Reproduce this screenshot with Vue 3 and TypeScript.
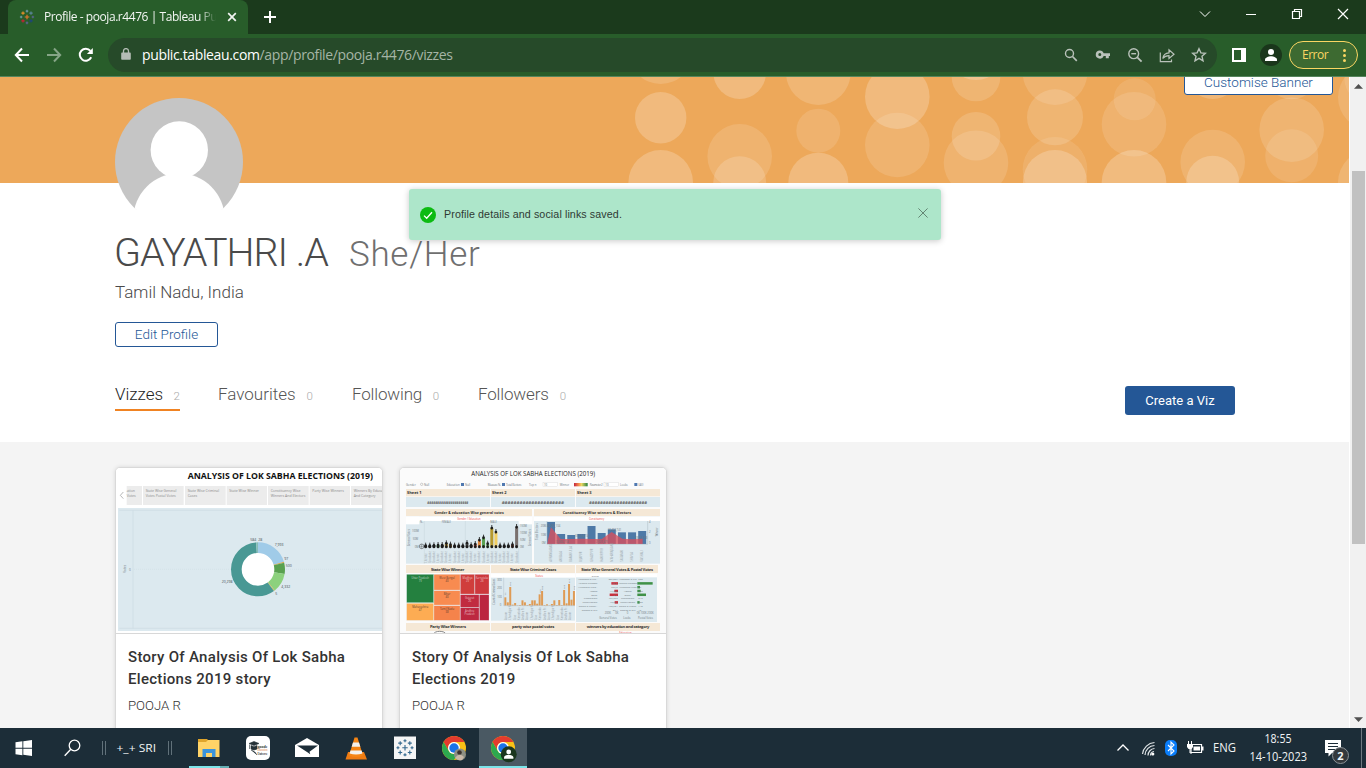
<script setup lang="ts">
interface Circle { x: number; y: number; r: number; o: number }

const circles: Circle[] = [
  [660.7, 51.7, 32.3, 0.15], [660.7, 117.7, 25.7, 0.21], [660.7, 182.3, 32.3, 0.21],
  [739.7, 72.7, 26.3, 0.21], [739.7, 156.3, 32.3, 0.13], [739.7, 182.7, 26.5, 0.17],
  [818.3, 72.7, 32.3, 0.16], [818.3, 130.7, 22, 0.12], [818.3, 182.7, 30, 0.21],
  [897.3, 96.7, 32.3, 0.21], [897.3, 145, 32.3, 0.13],
  [976, 77, 24.3, 0.15], [976, 50, 30, 0.2], [976, 136.3, 24.3, 0.15], [976, 162.7, 32.3, 0.13],
  [1055, 72.7, 32.3, 0.13], [1055, 117.3, 28, 0.15], [1055, 169.3, 32.3, 0.1], [1055, 182, 32, 0.21],
  [1134.7, 99.3, 21, 0.1], [1134, 124.3, 32.3, 0.12], [1134, 182.3, 32.3, 0.22],
  [1212.7, 162, 32.3, 0.13], [1212.7, 182.3, 26.5, 0.2], [1212.7, 72.7, 26.3, 0.18],
  [1291.7, 129.7, 32.3, 0.14], [1291.7, 155.7, 26.5, 0.11], [1291.7, 72.7, 26.5, 0.15],
  [1370.3, 97.3, 32.3, 0.13], [1370.3, 78, 26, 0.1], [1370.3, 182.3, 32.3, 0.15],
].map(([x, y, r, o]) => ({ x, y: y - 77, r, o }))

const tabs = [
  { name: 'Vizzes', count: 2, cls: 'tab t1 active' },
  { name: 'Favourites', count: 0, cls: 'tab t2' },
  { name: 'Following', count: 0, cls: 'tab t3' },
  { name: 'Followers', count: 0, cls: 'tab t4' },
]

const storyTabs = [
  { x: 50, w: 46, a: 'ation', b: 'Votes' },
  { x: 99, w: 122, a: 'State Wise General', b: 'Votes Postal Votes' },
  { x: 225, w: 122, a: 'State Wise Criminal', b: 'Cases' },
  { x: 350, w: 121, a: 'State Wise Winner', b: '' },
  { x: 474, w: 122, a: 'Constituency Wise', b: 'Winners And Electors' },
  { x: 599, w: 121, a: 'Party Wise Winners', b: '' },
  { x: 723, w: 100, a: 'Winners By Educa', b: 'And Category' },
]

const slices = [
  { c: '#a0cbe8', s: 0, l: 73 },
  { c: '#d9a648', s: 73, l: 2 },
  { c: '#59a14f', s: 75, l: 25 },
  { c: '#8cd17d', s: 100, l: 41 },
  { c: '#d8b850', s: 141, l: 2 },
  { c: '#499894', s: 143, l: 211 },
  { c: '#86bcb6', s: 354, l: 6 },
]

const sheets = [
  { x: 33, w: 252, n: 'Sheet 1', tx: 97, tw: 123 },
  { x: 288, w: 252, n: 'Sheet 2', tx: 320, tw: 187 },
  { x: 543, w: 252, n: 'Sheet 3', tx: 582, tw: 174 },
]

const gantt = [
  [3, '#222'], [3, '#222'], [4, '#222'], [5, '#3c7a3c'], [5, '#222'], [10, '#b08a30'], [6, '#b07a30'], [3, '#222'], [3, '#222'], [3, '#222'],
  [11, '#555'], [4, '#222'], [8, '#b5533c'], [20, '#e08a40'], [27, '#59a14f'], [9, '#8cd17d'], [56, '#b6992d'], [44, '#f1ce63'],
  [3, '#222'], [3, '#222'], [3, '#222'], [6, '#b5533c'], [59, '#79706e'],
].map(([h, c], i) => ({ x: 92 + i * 12.4, h: h as number, c: c as string }))

const blue = [66, 30, 27, 30, 54, 33, 44, 35, 35, 39]
const redArea = '456,252 468,202 497,237 530,237 560,236 590,237 620,237 650,216 682,236 712,238 743,236 743,252'

const crime = [25, 10, 56, 3, 8, 1, 2, 16, 10, 2, 5, 16, 16, 6, 34, 44, 2, 4, 1, 5, 16, 2, 17, 2, 47, 7, 65, 18, 44]

const treemap = [
  { x: 35, y: 343, w: 81, h: 85, c: '#24803f', t: 'Uttar Pradesh', n: '79' },
  { x: 35, y: 430, w: 81, h: 51, c: '#fdac53', t: 'Maharashtra', n: '47' },
  { x: 117, y: 343, w: 78, h: 47, c: '#f88b50', t: 'West Bengal', n: '40' },
  { x: 117, y: 392, w: 78, h: 43, c: '#f88b50', t: 'Bihar', n: '40' },
  { x: 117, y: 437, w: 78, h: 44, c: '#f5834b', t: 'Tamil Nadu', n: '38' },
  { x: 196, y: 343, w: 43, h: 59, c: '#d03e3c', t: 'Madhya', n: '29' },
  { x: 240, y: 343, w: 42, h: 59, c: '#cd383d', t: 'Karnataka', n: '28' },
  { x: 196, y: 404, w: 56, h: 38, c: '#c12b40', t: 'Gujarat', n: '26' },
  { x: 253, y: 404, w: 29, h: 77, c: '#bb2640', t: '', n: '' },
  { x: 196, y: 443, w: 56, h: 38, c: '#bd2840', t: 'Andhra', n: 'Pradesh' },
]

const voteRows = [
  { s: 'Andaman & Nic..', v: '206,807', m: 'Andaman & Nic', r: 0, g: 0, n: '500' },
  { s: 'Andhra Pradesh', v: '30,7', m: 'Andhra Pradesh', r: 20, g: 46, n: '' },
  { s: 'Arunachal Prad..', v: '665,0', m: 'Arunachal Prad', r: 0, g: 8, n: '86' },
  { s: 'Assam', v: '17,986', m: 'Assam', r: 11, g: 10, n: '480' },
  { s: 'Bihar', v: '40,1', m: 'Bihar', r: 25, g: 26, n: '' },
  { s: 'Chandigarh', v: '456,252', m: 'Chandigarh', r: 0, g: 0, n: '342' },
  { s: 'Chhattisgarh', v: '13,656', m: 'Chhattisgarh', r: 10, g: 7, n: '280' },
  { s: 'Dadra & Nagar..', v: '198,684', m: 'Dadra & Nagar', r: 0, g: 0, n: '148' },
  { s: 'Daman & Diu', v: '86,4', m: 'Daman & Diu', r: 0, g: 0, n: '43' },
]

const plus = [
  [12, 12, 3.4, 'c'], [12, 3.2, 1.9, 't'], [12, 20.8, 1.9, 'b'], [3.2, 12, 1.9, 'l'], [20.8, 12, 1.9, 'r'],
  [6, 6.2, 2.5, 'tl'], [18, 6.2, 2.5, 'tr'], [6, 17.8, 2.5, 'bl'], [18, 17.8, 2.5, 'br'],
] as [number, number, number, string][]
const plusColor: Record<string, string> = {
  c: '#e8762c', t: '#7099a5', b: '#5a6591', l: '#7099a5', r: '#5b6591', tl: '#eb9129', tr: '#5b879b', bl: '#c72035', br: '#1f457e',
}
const plusPath = (p: [number, number, number, string]) =>
  `M${p[0] - p[2]} ${p[1]}h${p[2] * 2}M${p[0]} ${p[1] - p[2]}v${p[2] * 2}`
</script>

<template>
  <div class="screen">
    <header class="titlebar">
      <div class="tabchip">
        <svg class="fav" viewBox="0 0 24 24"><path v-for="p in plus" :key="p[3]" :d="plusPath(p)" :stroke="plusColor[p[3]]" stroke-width="1.7" /></svg>
        <span class="tabtitle">Profile - pooja.r4476 | Tableau Public</span>
        <svg class="tabx" viewBox="0 0 10 10"><path d="M1.2 1.2l7.6 7.6M8.8 1.2L1.2 8.8" stroke="#f2f5f2" stroke-width="1.7" /></svg>
      </div>
      <svg class="newtab" viewBox="0 0 14 14"><path d="M7 1v12M1 7h12" stroke="#fff" stroke-width="2" /></svg>
      <div class="winctl">
        <svg width="12" height="12" viewBox="0 0 12 12"><path d="M1 3.5l5 5 5-5" /></svg>
        <svg width="12" height="12" viewBox="0 0 12 12"><path d="M1 6.5h10" /></svg>
        <svg width="12" height="12" viewBox="0 0 12 12"><path d="M1.5 3.5h7v7h-7zM3.5 3.5v-2h7v7h-2" stroke-width="1.2" /></svg>
        <svg width="12" height="12" viewBox="0 0 12 12"><path d="M1 1l10 10M11 1L1 11" stroke-width="1.2" /></svg>
      </div>
    </header>

    <div class="toolbar">
      <svg class="nav back" viewBox="0 0 16 16"><path d="M15 8H2M8 1.5L1.8 8 8 14.5" stroke="#fff" /></svg>
      <svg class="nav fwd" viewBox="0 0 16 16"><path d="M1 8h13M8 1.5L14.2 8 8 14.5" stroke="#86a587" /></svg>
      <svg class="nav reload" viewBox="0 0 16 16"><path d="M13.2 10.3A6 6 0 1 1 12.4 3.9" stroke="#fff" /><path d="M14.8 1v5.9H8.9z" fill="#fff" stroke="none" /></svg>
      <div class="omnibox">
        <svg class="lock" viewBox="0 0 10 12"><path d="M1 4.6h8a.8.8 0 0 1 .8.8v5.6a.8.8 0 0 1-.8.8H1a.8.8 0 0 1-.8-.8V5.400A.8.8 0 0 1 1 4.600z" fill="#b4bcb5" /><path d="M2.500 5V2.900a2.500 2.300 0 0 1 5 0V5" fill="none" stroke="#b4bcb5" stroke-width="1.300" /></svg>
        <span class="url"><b>public.tableau.com</b>/app/profile/pooja.r4476/vizzes</span>
        <div class="omni-icons">
          <svg viewBox="0 0 16 16"><circle cx="6.500" cy="6.500" r="4" /><path d="M9.500 9.500l4.300 4.300" stroke-width="1.700" /></svg>
          <svg viewBox="0 0 16 16"><path d="M4.800 3.400a4.100 4.100 0 1 0 3.900 5.500h2.100v2.300h3V8.900H15V6.300H8.700A4.100 4.100 0 0 0 4.800 3.400zm0 2.700a1.500 1.500 0 1 1 0 3 1.500 1.500 0 0 1 0-3z" fill="#b9c2ba" stroke="none" fill-rule="evenodd" /></svg>
          <svg viewBox="0 0 16 16"><circle cx="6.700" cy="6.700" r="4.900" /><path d="M10.300 10.300l4.300 4.300" stroke-width="1.800" /><path d="M4.300 6.700h4.800" /></svg>
          <svg viewBox="0 0 16 16"><path d="M1.300 5.500v9.200h11.200v-2.200M3.800 11.500c.6-3.800 2.800-5.600 6.200-5.700V2.900L15 7.200l-5 4.200V8.600c-2.800 0-4.600.8-6.200 2.900z" stroke-width="1.200" /></svg>
          <svg viewBox="0 0 16 16"><path d="M8 1.700l1.900 4.200 4.500.4-3.400 3 1 4.500L8 11.400l-4 2.400 1-4.500-3.400-3 4.500-.4z" /></svg>
        </div>
      </div>
      <svg class="side" viewBox="0 0 14 14"><path d="M0 0h14v14H0zM2 2v10h7V2z" fill="#fff" fill-rule="evenodd" /></svg>
      <svg class="user" viewBox="0 0 22 22"><circle cx="11" cy="11" r="11" fill="#1a361b" /><circle cx="11" cy="8" r="3" fill="#fff" /><path d="M5 17v-1.500c0-2 3.500-3.300 6-3.300s6 1.300 6 3.300V17z" fill="#fff" /></svg>
      <div class="errpill"><span>Error</span><i><u></u><u></u><u></u></i></div>
    </div>

    <main class="viewport">
      <div class="page">
        <section class="banner">
          <svg class="dots" viewBox="0 0 1349 106"><circle v-for="(c, i) in circles" :key="i" :cx="c.x" :cy="c.y" :r="c.r" :fill-opacity="c.o" fill="#fff" /></svg>
          <button class="customise">Customise Banner</button>
        </section>

        <section class="head">
          <svg class="avatar" viewBox="0 0 128 128">
            <clipPath id="av"><circle cx="64" cy="64" r="64" /></clipPath>
            <g clip-path="url(#av)"><rect width="128" height="112" fill="#c5c5c5" /><circle cx="64.300" cy="52" r="28.700" fill="#fff" /><circle cx="64" cy="121" r="45.700" fill="#fff" /><rect y="110.300" width="128" height="18" fill="#fff" /></g>
          </svg>
          <div class="names"><h1>GAYATHRI .A</h1><span class="pronoun">She/Her</span></div>
          <div class="location">Tamil Nadu, India</div>
          <button class="edit">Edit Profile</button>
          <div class="tabrow">
            <nav class="tabs">
              <a v-for="t in tabs" :key="t.name" :class="t.cls"><span class="tn">{{ t.name }}</span><span class="tc">{{ t.count }}</span></a>
            </nav>
            <button class="create">Create a Viz</button>
          </div>
        </section>

        <section class="cards">
          <article class="card">
            <svg class="thumb" viewBox="18 24 798 495">
              <rect x="18" y="24" width="798" height="495" fill="#fff" />
              <text x="233" y="57" class="tb" font-size="28" textLength="556" lengthAdjust="spacingAndGlyphs">ANALYSIS OF LOK SABHA ELECTIONS (2019)</text>
              <path d="M40 96l-9 10 9 10" fill="none" stroke="#aaa" stroke-width="2.500" />
              <g v-for="s in storyTabs" :key="s.x"><rect :x="s.x" y="78" :width="s.w" height="57" fill="#ececec" /><text :x="s.x === 50 ? 50 : s.x + 8" y="97" class="tt" font-size="10.500">{{ s.a }}</text><text :x="s.x === 50 ? 50 : s.x + 8" y="112" class="tt" font-size="10.500">{{ s.b }}</text></g>
              <rect x="24" y="144" width="794" height="369" fill="#dce9ef" />
              <path d="M28 151h790M28 505h790M69 151v354" stroke="#cbdbe3" stroke-width="2" />
              <path d="M72 328h746" stroke="#cfdde3" stroke-width="1.500" stroke-dasharray="3 3" />
              <text transform="translate(48 338) rotate(-90)" class="lab" font-size="9">Votes</text><text x="57" y="332" class="lab" font-size="9">0</text>
              <circle cx="444" cy="328" r="50" fill="#fff" />
              <circle v-for="s in slices" :key="s.s" cx="444" cy="328" r="65" fill="none" :stroke="s.c" stroke-width="32" pathLength="360" :stroke-dasharray="`${s.l} ${360 - s.l}`" :stroke-dashoffset="-s.s" transform="rotate(-90 444 328)" />
              <g class="lab dark" font-size="10.500"><text x="421" y="242">584</text><text x="445" y="242">28</text><text x="494" y="258">7,993</text><text x="523" y="299">97</text><text x="527" y="321">500</text><text x="514" y="383">4,332</text><text x="496" y="405">5</text><text x="335" y="370">20,298</text></g>
            </svg>
            <div class="info"><h3>Story Of Analysis Of Lok Sabha Elections 2019 story</h3><p>POOJA R</p></div>
          </article>

          <article class="card">
            <svg class="thumb" viewBox="15 24 798 495">
              <rect x="15" y="24" width="798" height="495" fill="#fbfbfb" />
              <text x="229" y="49" class="tr" font-size="20" textLength="371" lengthAdjust="spacingAndGlyphs">ANALYSIS OF LOK SABHA ELECTIONS (2019)</text>
              <g class="lab" font-size="8.500">
                <text x="33" y="77">Gender</text><circle cx="80" cy="73" r="3.500" fill="none" stroke="#777" /><text x="87" y="77">Null</text>
                <text x="155" y="77">Education</text><rect x="198" y="69" width="9" height="9" fill="#4f78b0" /><text x="210" y="77">Null</text>
                <text x="278" y="77" textLength="40">Measure N..</text><rect x="321" y="69" width="9" height="9" fill="#4f78b0" /><text x="333" y="77" textLength="46">Total Electors</text>
                <text x="402" y="77">Top n</text><text x="494" y="77">Winner</text>
                <text x="584" y="77" textLength="39">Parameter 2</text><text x="675" y="77">Looks</text><rect x="718" y="69" width="9" height="9" fill="#4f78b0" /><text x="730" y="77">(All)</text>
              </g>
              <rect x="444" y="67" width="44" height="13" fill="#fff" stroke="#ccc" /><text x="447" y="77" class="lab" font-size="8.500">10</text>
              <rect x="627" y="67" width="44" height="13" fill="#fff" stroke="#ccc" /><text x="631" y="77" class="lab" font-size="8.500">10</text>
              <defs><linearGradient id="heat"><stop offset="0" stop-color="#c3253f" /><stop offset=".35" stop-color="#f58d4e" /><stop offset=".55" stop-color="#e9d863" /><stop offset="1" stop-color="#24803f" /></linearGradient></defs>
              <rect x="537" y="69" width="41" height="10" fill="url(#heat)" />

              <g v-for="s in sheets" :key="s.n"><rect :x="s.x" y="87" :width="s.w" height="22" fill="#f5e8d6" /><text :x="s.x + 3" y="101" class="hd" font-size="12">{{ s.n }}</text><rect :x="s.x" y="111" :width="s.w" height="30" fill="#dce9ef" /><text :x="s.tx" y="131" class="hash" font-size="10" :textLength="s.tw" lengthAdjust="spacingAndGlyphs">#####################</text></g>

              <rect x="33" y="147" width="378" height="21" fill="#f5e8d6" /><rect x="417" y="147" width="378" height="21" fill="#f5e8d6" />
              <text x="118" y="162" class="hd" font-size="12.500" textLength="208" lengthAdjust="spacingAndGlyphs">Gender &amp; education Wise general votes</text>
              <text x="503" y="162" class="hd" font-size="12.500" textLength="205" lengthAdjust="spacingAndGlyphs">Constituency Wise winners &amp; Electors</text>
              <rect x="33" y="170" width="378" height="141" fill="#dce9ef" /><rect x="33" y="170" width="378" height="13" fill="#fff" /><rect x="33" y="170" width="40" height="23" fill="#fff" /><rect x="371" y="170" width="40" height="23" fill="#fff" />
              <text x="187" y="180" class="rd" font-size="9.500" textLength="70" lengthAdjust="spacingAndGlyphs">Gender / Education</text>
              <rect x="417" y="170" width="378" height="141" fill="#dce9ef" /><rect x="417" y="170" width="378" height="13" fill="#fff" /><text x="582" y="180" class="rd" font-size="9.500" textLength="46" lengthAdjust="spacingAndGlyphs">Constituency</text>
              <g class="lab" font-size="8"><text x="75" y="190">N..</text><text x="140" y="190" textLength="28" lengthAdjust="spacingAndGlyphs">FEMALE</text><text x="286" y="190" textLength="20" lengthAdjust="spacingAndGlyphs">MALE</text><text x="51" y="215">100M</text><text x="53" y="240">50M</text><text x="59" y="265">0M</text><text x="375" y="202">150M</text><text x="375" y="223">100M</text><text x="375" y="244">50M</text><text x="375" y="265">0M</text><text transform="translate(45 259) rotate(-90)">General Votes</text><text transform="translate(407 259) rotate(-90)">General Votes</text></g>
              <path d="M88 183v128M211 183v128M371 193v118" stroke="#c6d5dc" stroke-width="1.500" />
              <circle cx="80" cy="259" r="7" fill="none" stroke="#333" stroke-width="1.500" /><path d="M73 259h14M80 252v14" stroke="#333" />
              <g v-for="(g, i) in gantt" :key="i"><rect :x="g.x - 4.500" :y="260 - g.h" width="9" :height="g.h + 2" :fill="g.c" /><ellipse :cx="g.x" cy="260" rx="4" ry="5" fill="#1d1d1d" /><path :d="`M${g.x} ${251 - g.h}v14`" stroke="#1d1d1d" stroke-width="2.500" /><circle :cx="g.x" :cy="260 - g.h" r="4" fill="#1d1d1d" /><text :transform="`translate(${g.x + 3} 308) rotate(-90)`" class="axis" font-size="8">{{ i % 3 ? 'Graduate' : 'Literate' }}</text></g>

              <rect v-for="(h, i) in blue" :key="'b' + i" :x="456 + i * 30.400" :y="252 - h" width="24" :height="h" fill="#4e79a7" />
              <polygon :points="redArea" fill="#d9505c" fill-opacity=".78" />
              <path d="M456 183v70M758 183v70M456 253h302" stroke="#aabac2" stroke-width="1.500" />
              <g class="lab" font-size="8"><text x="437" y="202">20M</text><text x="437" y="228">10M</text><text x="440" y="252">0M</text><text x="762" y="190">4</text><text x="762" y="220">2</text><text x="762" y="251">0</text><text x="455" y="202">46,201,104</text><text x="480" y="250">13,866,714</text><text x="540" y="232">18,014,714</text><text x="603" y="250">2,021,475</text><text x="638" y="213">18,404,741</text><text x="720" y="236" textLength="37">18,152,718</text><text transform="translate(429 240) rotate(-90)">Total Electors</text><text transform="translate(788 229) rotate(-90)">Winner</text></g>
              <text v-for="(n, i) in ['AURANGABAD', 'AMBALA', 'BARAMULLA', 'BIJAPUR', 'GHAZIPUR', 'HAMIRPUR', 'MAHARAJGANJ', 'SASARAM', 'SHIMLA', 'VAISHALI']" :key="n" :transform="`translate(${471 + i * 30.400} 305) rotate(-90)`" class="axis" font-size="8">{{ n }}</text>

              <g fill="#f5e8d6"><rect x="33" y="315" width="252" height="24" /><rect x="288" y="315" width="252" height="24" /><rect x="543" y="315" width="246" height="24" /><rect x="33" y="489" width="252" height="24" /><rect x="288" y="489" width="252" height="24" /><rect x="543" y="489" width="252" height="24" /></g>
              <g class="hd" font-size="12.500"><text x="108" y="332" textLength="100">State Wise Winner</text><text x="345" y="332" textLength="139">State Wise Criminal Cases</text><text x="559" y="332" textLength="215">State Wise General Votes &amp; Postal Votes</text><text x="105" y="504" textLength="108">Party Wise Winners</text><text x="351" y="504" textLength="127">party wise postal votes</text><text x="575" y="504" textLength="188">winners by education and category</text></g>
              <g v-for="(t, i) in treemap" :key="'t' + i"><rect :x="t.x" :y="t.y" :width="t.w" :height="t.h" :fill="t.c" stroke="#dce9ef" stroke-width=".8" /><text :x="t.x + t.w / 2" :y="t.y + 13" :class="i > 4 || i === 0 ? 'tmw' : 'tmd'" font-size="8" text-anchor="middle">{{ t.t }}</text><text :x="t.x + t.w / 2" :y="t.y + 23" :class="i > 4 || i === 0 ? 'tmw' : 'tmd'" font-size="8" text-anchor="middle">{{ t.n }}</text></g>
              <rect x="288" y="342" width="252" height="140" fill="#dce9ef" /><rect x="288" y="342" width="252" height="11" fill="#fff" /><text x="421" y="350" class="rd" font-size="8">States</text>
              <g v-for="(h, i) in crime" :key="'c' + i"><rect :x="328 + i * 7.350" :y="437 - h" width="6" :height="h" fill="#df9b55" /><text v-if="h > 30 || i === 0" :transform="`translate(${334 + i * 7.350} ${434 - h}) rotate(-90)`" class="lab" font-size="7">{{ h * 7 }}</text></g>
              <path d="M326 353v84h214" fill="none" stroke="#b3c2ca" stroke-width="1.500" />
              <text v-for="i in 16" :key="'s' + i" :transform="`translate(${323 + i * 12.900} 480) rotate(-90)`" class="axis" font-size="8">{{ ['Andhra Pr..', 'Assam', 'Chandigarh', 'Goa', 'Karnataka'][i % 5] }}</text>
              <g class="lab" font-size="8"><text x="307" y="363">300</text><text x="307" y="388">200</text><text x="307" y="413">100</text><text x="314" y="438">0</text><text transform="translate(301 434) rotate(-90)" textLength="78">Count of Criminal Cases</text></g>

              <rect x="543" y="342" width="243" height="144" fill="#dce9ef" /><rect x="543" y="342" width="243" height="10" fill="#fff" /><text x="590" y="350" class="lab" font-size="7.500">States</text>
              <g v-for="(r, i) in voteRows" :key="'v' + i" class="lab" font-size="7.500">
                <text x="607" :y="361 + i * 11.400" text-anchor="end">{{ r.s }}</text><rect :x="669 - r.r" :y="355 + i * 11.400" :width="r.r" height="7.500" fill="#c8323e" /><text x="668" :y="361 + i * 11.400" text-anchor="end">{{ r.v }}</text><text x="698" :y="361 + i * 11.400" text-anchor="middle">{{ r.m }}</text><rect x="727" :y="355 + i * 11.400" :width="r.g" height="7.500" fill="#3f9147" /><text :x="730" :y="361 + i * 11.400">{{ r.n }}</text>
              </g>
              <g class="lab" font-size="8"><text x="629" y="463">200K</text><text x="661" y="463">0K</text><text x="695" y="463">0</text><text x="725" y="463">0K 100K 200K</text><text x="613" y="476">General Votes</text><text x="685" y="476">Looks</text><text x="729" y="476">Postal Votes</text></g>
              <ellipse cx="134" cy="521" rx="17" ry="7" fill="none" stroke="#888" stroke-width="3" /><text x="673" y="521" class="rd" font-size="8">Education</text>
            </svg>
            <div class="info"><h3>Story Of Analysis Of Lok Sabha Elections 2019</h3><p>POOJA R</p></div>
          </article>
        </section>

        <div class="toast">
          <svg class="ok" viewBox="0 0 16 16"><circle cx="8" cy="8" r="8" fill="#0cbb12" /><path d="M4 8.600l2.700 2.700 5.300-6.100" fill="none" stroke="#fff" stroke-width="1.300" /></svg>
          <span class="msg">Profile details and social links saved.</span>
          <svg class="close" viewBox="0 0 10 10"><path d="M.4.4l9.200 9.200M9.600.4L.4 9.600" stroke="#5a7b6a" stroke-width=".9" /></svg>
        </div>
      </div>
      <div class="scroll">
        <svg width="9" height="5" viewBox="0 0 9 5"><path d="M4.500 0L9 4.700H0z" fill="#505050" /></svg>
        <div class="thumbbar"></div>
        <svg width="9" height="5" viewBox="0 0 9 5"><path d="M4.500 5L9 .3H0z" fill="#505050" /></svg>
      </div>
    </main>

    <footer class="taskbar">
      <svg class="full" viewBox="0 0 1366 40">
        <path d="M15.500 14.300l6.900-1v6.500h-6.900zM23.300 13.200l8.700-1.200v7.800h-8.700zM15.500 20.700h6.900v6.500l-6.900-1zM23.300 20.700H32V28l-8.700-1.200z" fill="#fff" />
        <circle cx="74.500" cy="17.500" r="5.300" fill="none" stroke="#fff" stroke-width="1.300" /><path d="M70.800 21.300l-6.100 6.400" stroke="#fff" stroke-width="1.400" />
        <path d="M102.500 13v14M105.500 13v14M168.500 13v14M171.500 13v14" stroke="#61717a" />
        <text x="116.500" y="24" class="ui" font-size="11.500" textLength="39.500" lengthAdjust="spacingAndGlyphs">+_+ SRI</text>
        <g><path d="M198 11h9l2 2h10v16h-21z" fill="#e0a52b" /><path d="M198 14h8l2-2h11.500v17H198z" fill="#ffd367" /><path d="M202.500 21h13v8h-3.500v-4h-6v4h-3.500z" fill="#3b94dc" /></g>
        <rect x="189" y="38" width="31" height="2" fill="#7be4e9" /><rect x="220" y="38" width="9" height="2" fill="#63aeb3" />
        <rect x="246" y="8" width="24" height="24" rx="5" fill="#fff" /><path d="M249 15.500l5-2 5 2-5 2zM251 17.500v3.500q3 2 6 0v-3.500l-3 1.300zM249.500 16.500v4.500M251 22q4 1 6 5" fill="#263238" stroke="#263238" stroke-width=".6" /><text x="257.500" y="19.500" font-size="5" textLength="10" lengthAdjust="spacingAndGlyphs" class="logo">goode</text><text x="257.500" y="23" font-size="4" textLength="10" lengthAdjust="spacingAndGlyphs" class="logo2">Education</text><text x="257.500" y="26.500" font-size="4" textLength="10" lengthAdjust="spacingAndGlyphs" class="logo">Universe</text>
        <path d="M295 17l12-7 12 7v12h-24z" fill="#fff" /><path d="M297 17.500h21l-8.500 6.200.8 2.500-3.300-2.300z" fill="#1c2d38" />
        <g><path d="M348 24h16l3 7.500h-21.500z" fill="#ef7b11" /><path d="M354.500 9.500h3L363 27.500q-7 3-14 0z" fill="#f58515" /><path d="M353 14.500h6l1.300 4.200h-8.600zM350.500 22.500h11.100l.9 3q-6.500 2-12.900 0z" fill="#f4f1ec" /></g>
        <rect x="394" y="8.500" width="22" height="22.500" fill="#f5f5f5" /><g transform="translate(395.400 10.200) scale(.8)"><path v-for="p in plus" :key="'w' + p[3]" :d="plusPath(p)" stroke="#35698f" stroke-width="1.400" /></g>
        <rect x="479" y="0" width="48" height="40" fill="#4a5963" /><rect x="479" y="38" width="48" height="2" fill="#7be4e9" />
        <g v-for="cx in [454, 503]" :key="cx" :transform="`translate(${cx} 20)`">
          <circle r="12" fill="#fbc116" /><path d="M-10.390 -6A12 12 0 0 1 10.390 -6H0A6 6 0 0 0 -5.200 3z" fill="#e33b2e" /><path d="M-10.390 -6A12 12 0 0 0 0 12L5.200 3A6 6 0 0 1 -5.200 3z" fill="#2da94f" /><circle r="6" fill="#fff" /><circle r="4.700" fill="#1a73e8" />
        </g>
        <circle cx="460" cy="26.500" r="6" fill="#8d8f83" /><circle cx="459.500" cy="24.500" r="2.300" fill="#3c332f" /><path d="M455 30q4-6 9-1l-2 3q-4 1-7-2z" fill="#c9b8a8" />
        <circle cx="508.700" cy="26.300" r="8" fill="#1b361e" /><circle cx="508.700" cy="23.900" r="2.400" fill="#fff" /><path d="M504 30.800v-1.300c0-1.700 2.600-2.700 4.700-2.700s4.700 1 4.700 2.700v1.300z" fill="#fff" />

        <path d="M1117.500 22.500l5.500-5.500 5.500 5.500" fill="none" stroke="#fff" stroke-width="1.300" />
        <g fill="none" stroke="#dfe4e6" stroke-width="1.200"><path d="M1142.500 26a13 13 0 0 1 12-11.500M1145 27a10 10 0 0 1 9.500-9.500M1148 27.500a7 7 0 0 1 6.500-7M1150.500 27.500a4 4 0 0 1 3.500-4" /></g><circle cx="1152.800" cy="26" r="1.600" fill="#fff" />
        <rect x="1165" y="12" width="12" height="16" rx="5" fill="#0a7dfa" /><path d="M1168 17l6 6-3 3V14l3 3-6 6" fill="none" stroke="#fff" stroke-width="1.100" />
        <path d="M1191 16.500h10.500v8H1191z" fill="none" stroke="#fff" stroke-width="1.200" /><path d="M1193.500 18.500h6.500v4h-6.500zM1202 18.500h1.500v4h-1.500zM1187 16h6v3l-1.500 2h-3l-1.500-2z" fill="#fff" /><path d="M1188.500 13v3M1191.500 13v3M1190 21v4h2" fill="none" stroke="#fff" />
        <text x="1213" y="24" class="ui" font-size="12" textLength="23" lengthAdjust="spacingAndGlyphs">ENG</text>
        <text x="1264.500" y="15" class="ui" font-size="12" textLength="27" lengthAdjust="spacingAndGlyphs">18:55</text>
        <text x="1249.500" y="33" class="ui" font-size="12" textLength="57.500" lengthAdjust="spacingAndGlyphs">14-10-2023</text>
        <path d="M1325 12h16v13h-9l-3.500 3.500V25h-3.500z" fill="#fff" /><path d="M1328 15.500h10M1328 18.500h10M1328 21.500h7" stroke="#1c2d38" /><circle cx="1340.500" cy="27.500" r="8" fill="#34393d" stroke="#8b9297" /><text x="1340.500" y="31.500" text-anchor="middle" class="ui bold" font-size="11">2</text>
        <path d="M1361.500 0v40" stroke="#6d7980" />
      </svg>
    </footer>
  </div>
</template>

<style>
html, body { margin: 0; overflow: hidden; }
</style>
<style scoped>
* { box-sizing: border-box; }
.screen { width: 1366px; height: 768px; overflow: hidden; display: flex; flex-direction: column; font-family: Roboto, "Noto Sans", sans-serif; }
.titlebar { height: 34px; background: #1b3a1c; display: flex; align-items: center; padding-left: 8px; flex: none; }
.tabchip { width: 240px; height: 34px; background: #285d2a; border-radius: 8px 8px 0 0; display: flex; align-items: center; padding-left: 11px; }
.fav { width: 16px; height: 16px; fill: none; margin-right: 9px; }
.tabtitle { width: 172px; overflow: hidden; white-space: nowrap; font: 12px/16px "Open Sans", sans-serif; letter-spacing: -.44px; color: #f3f6f3; -webkit-mask-image: linear-gradient(90deg, #000 155px, transparent 172px); mask-image: linear-gradient(90deg, #000 155px, transparent 172px); }
.tabx { width: 10px; height: 10px; margin-left: 11px; }
.newtab { width: 14px; height: 14px; margin-left: 15px; }
.winctl { margin-left: auto; display: flex; gap: 34px; padding-right: 17px; margin-top: -6px; }
.winctl svg { fill: none; stroke: #fff; }
.toolbar { height: 43px; background: #285d2a; border-bottom: 1px solid #55855d; display: flex; align-items: center; flex: none; padding-left: 14px; }
.nav { width: 16px; height: 16px; fill: none; stroke-width: 2; margin-right: 16px; }
.reload { margin-right: 14px; }
.omnibox { width: 1109px; height: 34px; border-radius: 17px; background: #264a29; display: flex; align-items: center; padding: 0 10px 0 13px; }
.lock { width: 10px; height: 12px; margin-right: 11px; margin-top: -2px; }
.url { font: 14px/20px "Open Sans", sans-serif; letter-spacing: -.36px; color: #a5b5a6; white-space: nowrap; }
.url b { font-weight: 400; color: #fff; }
.omni-icons { margin-left: auto; display: flex; gap: 16px; }
.omni-icons svg { width: 16px; height: 16px; fill: none; stroke: #b9c2ba; stroke-width: 1.400; }
.side { width: 14px; height: 14px; margin-left: 15px; }
.user { width: 22px; height: 22px; margin-left: 14px; }
.errpill { margin-left: 7px; width: 69px; height: 28px; border: 1px solid #fbd663; border-radius: 14px; background: #3d6a31; color: #fbd663; font: 12px/26px "Open Sans", sans-serif; letter-spacing: -.5px; display: flex; align-items: center; padding-left: 12px; }
.errpill i { display: flex; flex-direction: column; gap: 2px; margin-left: auto; margin-right: 11px; }
.errpill u { width: 3px; height: 3px; border-radius: 50%; background: #fbd663; }
.viewport { height: 651px; display: flex; flex: none; }
.page { width: 1349px; height: 651px; overflow: hidden; position: relative; background: #fff; display: flex; flex-direction: column; }
.banner { height: 106px; flex: none; background: #eda85a; position: relative; overflow: hidden; }
.dots { width: 1349px; height: 106px; display: block; }
button { font-family: Roboto, sans-serif; font-weight: 300; padding: 0; border-radius: 3px; text-align: center; white-space: nowrap; }
.customise { position: absolute; right: 16px; top: -10px; width: 149px; height: 28px; background: #fff; border: 1px solid #245796; color: #245796; font-size: 13.500px; line-height: 29px; }
.head { height: 259px; flex: none; padding: 0 114px 0 115px; display: flex; flex-direction: column; align-items: flex-start; }
.avatar { width: 128px; height: 128px; margin-top: -85px; flex: none; position: relative; }
.names { height: 54px; display: flex; align-items: baseline; margin-left: -1px; }
h1 { margin: 0; font-weight: 300; font-size: 39.500px; line-height: 54px; color: #4a4a4a; letter-spacing: -1px; white-space: nowrap; width: 235px; }
.pronoun { font-weight: 300; font-size: 35px; line-height: 54px; color: #6f6f6f; letter-spacing: .7px; white-space: nowrap; }
.location { font-weight: 300; font-size: 17px; line-height: 24px; height: 24px; color: #4a4a4a; margin-bottom: 18px; white-space: nowrap; }
.edit { width: 103px; height: 25px; border: 1px solid #245796; background: #fff; color: #245796; font-size: 13.500px; line-height: 23px; flex: none; }
.tabrow { margin-top: 39px; width: 100%; display: flex; justify-content: space-between; height: 29px; }
.tabs { display: flex; }
.tab { display: flex; justify-content: space-between; align-items: baseline; font-weight: 300; font-size: 17px; letter-spacing: -.15px; line-height: 17px; height: 25px; color: #555; white-space: nowrap; }
.tc { font-size: 11.500px; color: #aaa; }
.t1 { width: 65px; margin-right: 38px; letter-spacing: 0; }
.t2 { width: 95px; margin-right: 39px; letter-spacing: 0; }
.t3 { width: 87px; margin-right: 39px; }
.t4 { width: 88px; }
.active { color: #222; border-bottom: 2px solid #f08322; }
.create { width: 110px; height: 29px; border: 0; background: #245796; color: #fff; font-size: 13px; line-height: 29px; font-weight: 400; }
.cards { flex: 1; background: #f4f4f4; padding: 25px 0 0 115px; display: flex; gap: 16px; }
.card { width: 268px; height: 300px; background: #fff; border: 1px solid #d9d9d9; border-radius: 5px; overflow: hidden; box-shadow: 0 0 4px rgba(0, 0, 0, .12); }
.thumb { width: 266px; height: 166px; display: block; border-bottom: 1px solid #d8d8d8; }
.thumb text { font-family: "Open Sans", sans-serif; }
.tb { font-weight: 700; fill: #111; }
.tr { fill: #222; }
.hd { font-weight: 700; fill: #333; }
.hash { font-weight: 700; fill: #666; }
.lab { fill: #6d777c; }
.dark { fill: #444c50; }
.axis { fill: #98a4aa; }
.tt { fill: #8a8a8a; }
.rd { fill: #ee4444; }
.tmw { fill: #ffffffaa; }
.tmd { fill: #5a4030; }
.info { padding: 12px 12px 12px 12px; }
h3 { margin: 0; font: 500 15px/22px Roboto, sans-serif; letter-spacing: .3px; color: #333; width: 236px; }
.info p { margin: 5px 0 0; font: 300 13.200px/22px Roboto, sans-serif; color: #333; }
.toast { position: absolute; left: 409px; top: 112px; width: 532px; height: 51px; background: #ade6ca; border-radius: 3px; box-shadow: 0 1px 6px rgba(0, 0, 0, .22); display: flex; align-items: center; padding: 0 13px 0 11px; font: 10.700px/14px "Liberation Sans", Arial, sans-serif; letter-spacing: .1px; color: #2f3a34; }
.msg { margin-top: -2px; }
.ok { width: 16px; height: 16px; margin-right: 8px; }
.close { width: 10px; height: 10px; margin-left: auto; margin-top: -3px; }
.scroll { width: 17px; background: #f1f1f1; display: flex; flex-direction: column; align-items: center; justify-content: space-between; padding: 7px 0 6px; border-left: 1px solid #fff; }
.thumbbar { width: 13px; height: 373px; background: #c1c1c1; margin-bottom: 92px; }
.scroll svg { display: block; }
.taskbar { height: 40px; flex: none; background: #1c2d38; }
.full { width: 1366px; height: 40px; display: block; fill: none; }
.ui { font-family: "Open Sans", sans-serif; fill: #f1f4f5; }
.bold { font-weight: 700; }
.logo { font-family: "Liberation Serif", serif; font-weight: 700; fill: #333; }
.logo2 { font-family: "Liberation Serif", serif; fill: #e07b39; }
</style>
